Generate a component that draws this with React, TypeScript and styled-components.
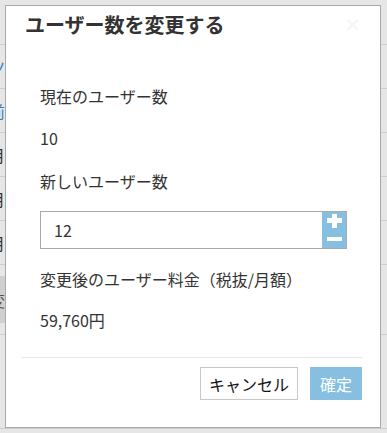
import React from "react";
import styled, { createGlobalStyle } from "styled-components";

const Global = createGlobalStyle`
  html, body { margin: 0; padding: 0; }
  body {
    background: #e6e6e6;
    font-family: "Noto Sans CJK JP", "Noto Sans", sans-serif;
    color: #333;
    width: 387px;
    height: 433px;
    overflow: hidden;
  }
`;

const Page = styled.div`
  position: relative;
  width: 387px;
  height: 433px;
  overflow: hidden;
`;

const BgTable = styled.div`
  display: flex;
  flex-direction: column;
  padding-top: 1px;
`;

const BgRow = styled.div<{ $h: number }>`
  height: ${(p) => p.$h}px;
  border-bottom: 1px solid #cdcdcd;
  display: flex;
  align-items: center;
`;

const BgCell = styled.div<{ $tone: "link" | "text" | "dark"; $band?: boolean }>`
  width: 30px;
  height: ${(p) => (p.$band ? "47px" : "auto")};
  background: ${(p) => (p.$band ? "#cfcfcf" : "transparent")};
  display: flex;
  align-items: center;
  font-size: 16px;
  line-height: 16px;
  color: ${(p) => (p.$tone === "link" ? "#3a7fc1" : p.$tone === "dark" ? "#555" : "#333")};
  span { margin-left: -11px; }
`;

const Modal = styled.div`
  position: absolute;
  left: 5px;
  top: 5px;
  width: 376px;
  height: 423px;
  box-sizing: border-box;
  background: #fff;
  border: 1px solid #a9a9a9;
  display: flex;
  flex-direction: column;
`;

const Header = styled.div`
  position: relative;
  padding: 9px 19px 0 19px;
`;

const Title = styled.h2`
  margin: 0;
  font-size: 20px;
  line-height: 20px;
  font-weight: 700;
  color: #333;
`;

const Close = styled.span`
  position: absolute;
  right: 19px;
  top: 8px;
  font-size: 20px;
  line-height: 20px;
  font-weight: 700;
  color: #f6f6f6;
  font-family: "DejaVu Sans", sans-serif;
`;

const Body = styled.div`
  padding: 53px 18px 0 34px;
  display: flex;
  flex-direction: column;
`;

const Text = styled.div<{ $mt?: number }>`
  font-size: 16px;
  line-height: 16px;
  color: #333;
  margin-top: ${(p) => p.$mt ?? 0}px;
`;

const InputBox = styled.div`
  margin-top: 22px;
  width: 307px;
  height: 38px;
  box-sizing: border-box;
  border: 1px solid #aaa;
  display: flex;
`;

const Input = styled.input`
  flex: 1;
  min-width: 0;
  border: 0;
  outline: 0;
  padding: 0 0 0 13px;
  font-family: "Noto Sans CJK JP", "Noto Sans", sans-serif;
  font-size: 16px;
  color: #333;
  background: transparent;
`;

const Spinner = styled.div`
  width: 24px;
  background: #86bfdf;
  display: flex;
  flex-direction: column;
  align-items: center;
  justify-content: space-between;
  padding: 2px 0 7px;
`;

const Divider = styled.div`
  margin: 29px 18px 0 16px;
  height: 1px;
  background: #e5e5e5;
`;

const Footer = styled.div`
  display: flex;
  justify-content: flex-end;
  gap: 12px;
  padding: 9px 18px 0 0;
`;

const Button = styled.button<{ $primary?: boolean }>`
  height: 33px;
  box-sizing: border-box;
  padding: 0 ${(p) => (p.$primary ? "9px" : "8px")};
  font-family: "Noto Sans CJK JP", "Noto Sans", sans-serif;
  font-size: 16px;
  line-height: 16px;
  border: 1px solid ${(p) => (p.$primary ? "#86bfdf" : "#c8c8c8")};
  background: ${(p) => (p.$primary ? "#86bfdf" : "#fff")};
  color: ${(p) => (p.$primary ? "#fff" : "#111")};
  cursor: pointer;
`;

export default function App() {
  const rows: { h: number; text?: string; tone: "link" | "text" | "dark"; band?: boolean }[] = [
    { h: 43, tone: "text" },
    { h: 43, text: "ツ", tone: "link" },
    { h: 43, text: "前", tone: "link" },
    { h: 43, text: "月", tone: "text" },
    { h: 43, text: "月", tone: "text" },
    { h: 43, text: "月", tone: "text" },
    { h: 69, text: "変", tone: "dark", band: true },
    { h: 93, tone: "text" },
  ];
  return (
    <Page>
      <Global />
      <BgTable>
        {rows.map((r, i) => (
          <BgRow key={i} $h={r.h}>
            <BgCell $tone={r.tone} $band={r.band}>
              {r.text && <span>{r.text}</span>}
            </BgCell>
          </BgRow>
        ))}
      </BgTable>
      <Modal>
        <Header>
          <Title>ユーザー数を変更する</Title>
          <Close>×</Close>
        </Header>
        <Body>
          <Text>現在のユーザー数</Text>
          <Text $mt={26}>10</Text>
          <Text $mt={27}>新しいユーザー数</Text>
          <InputBox>
            <Input defaultValue="12" />
            <Spinner>
              <svg width="15" height="14" viewBox="0 0 15 14">
                <rect x="0" y="4" width="15" height="5" fill="#fff" />
                <rect x="5" y="0" width="5" height="14" fill="#fff" />
              </svg>
              <svg width="15" height="4" viewBox="0 0 15 4">
                <rect x="0" y="0" width="15" height="4" fill="#fff" />
              </svg>
            </Spinner>
          </InputBox>
          <Text $mt={22}>変更後のユーザー料金（税抜/月額）</Text>
          <Text $mt={25}>59,760円</Text>
        </Body>
        <Divider />
        <Footer>
          <Button>キャンセル</Button>
          <Button $primary>確定</Button>
        </Footer>
      </Modal>
    </Page>
  );
}
